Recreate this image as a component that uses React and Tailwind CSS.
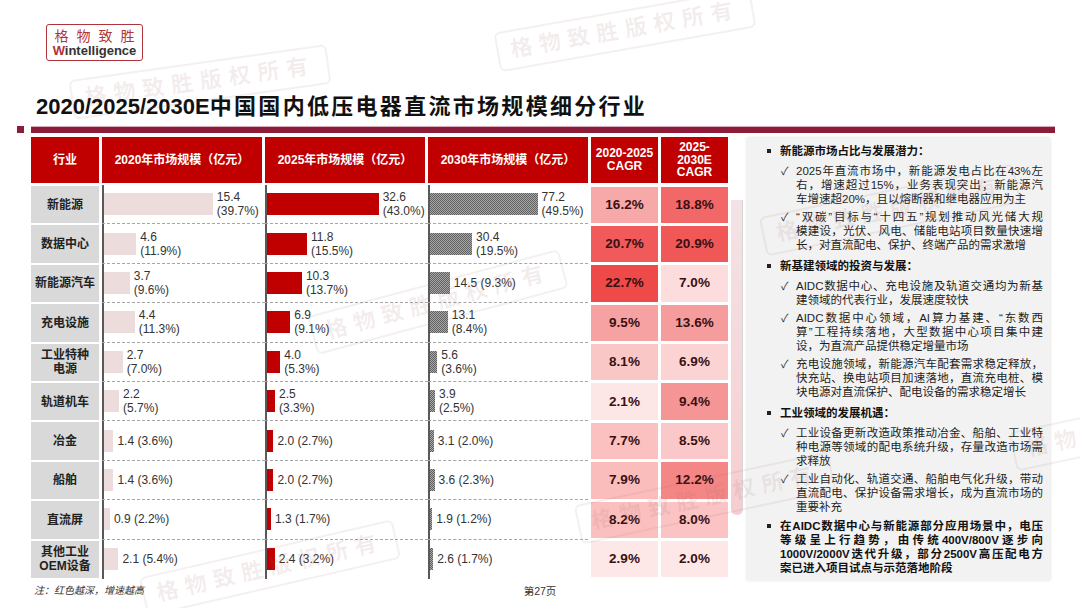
const rows = [
  { name: '新能源', v: [15.4, 32.6, 77.2], t: ['15.4\n(39.7%)', '32.6\n(43.0%)', '77.2\n(49.5%)'], g: ['16.2%', '18.8%'], c: ['bg-[#f7a9a9]', 'bg-[#f26868]'] },
  { name: '数据中心', v: [4.6, 11.8, 30.4], t: ['4.6\n(11.9%)', '11.8\n(15.5%)', '30.4\n(19.5%)'], g: ['20.7%', '20.9%'], c: ['bg-[#f05a5a]', 'bg-[#f05858]'] },
  { name: '新能源汽车', v: [3.7, 10.3, 14.5], t: ['3.7\n(9.6%)', '10.3\n(13.7%)', '14.5 (9.3%)'], g: ['22.7%', '7.0%'], c: ['bg-[#ee4a4a]', 'bg-[#fcdcdc]'] },
  { name: '充电设施', v: [4.4, 6.9, 13.1], t: ['4.4\n(11.3%)', '6.9\n(9.1%)', '13.1\n(8.4%)'], g: ['9.5%', '13.6%'], c: ['bg-[#f6a2a2]', 'bg-[#f59d9d]'] },
  { name: '工业特种\n电源', v: [2.7, 4.0, 5.6], t: ['2.7\n(7.0%)', '4.0\n(5.3%)', '5.6\n(3.6%)'], g: ['8.1%', '6.9%'], c: ['bg-[#fac7c7]', 'bg-[#fcd3d3]'] },
  { name: '轨道机车', v: [2.2, 2.5, 3.9], t: ['2.2\n(5.7%)', '2.5\n(3.3%)', '3.9\n(2.5%)'], g: ['2.1%', '9.4%'], c: ['bg-[#fde6e6]', 'bg-[#f69595]'] },
  { name: '冶金', v: [1.4, 2.0, 3.1], t: ['1.4 (3.6%)', '2.0 (2.7%)', '3.1 (2.0%)'], g: ['7.7%', '8.5%'], c: ['bg-[#fbc0c0]', 'bg-[#fac8c8]'] },
  { name: '船舶', v: [1.4, 2.0, 3.6], t: ['1.4 (3.6%)', '2.0 (2.7%)', '3.6 (2.3%)'], g: ['7.9%', '12.2%'], c: ['bg-[#fbbcbc]', 'bg-[#f48686]'] },
  { name: '直流屏', v: [0.9, 1.3, 1.9], t: ['0.9 (2.2%)', '1.3 (1.7%)', '1.9 (1.2%)'], g: ['8.2%', '8.0%'], c: ['bg-[#fbbfbf]', 'bg-[#fbc3c3]'] },
  { name: '其他工业\nOEM设备', v: [2.1, 2.4, 2.6], t: ['2.1 (5.4%)', '2.4 (3.2%)', '2.6 (1.7%)'], g: ['2.9%', '2.0%'], c: ['bg-[#fde7e7]', 'bg-[#fde7e7]'] },
]

const scale = [7.1, 3.44, 1.4]
const barColor = [
  'bg-[#ecdcdc]',
  'bg-[#c00000]',
  'bg-[conic-gradient(#606060_25%,#a8a8a8_0_50%,#606060_0_75%,#a8a8a8_0)] bg-[length:2px_2px]',
]
const colW = ['w-[163px]', 'w-[163px]', 'w-[160px]']

const notes = [
  {
    head: '新能源市场占比与发展潜力：',
    items: [
      ['2025年直流市场中，新能源发电占比在43%左', '右，增速超过15%，业务表现突出；新能源汽', '车增速超20%，且以熔断器和继电器应用为主'],
      ['“双碳”目标与“十四五”规划推动风光储大规', '模建设，光伏、风电、储能电站项目数量快速增', '长，对直流配电、保护、终端产品的需求激增'],
    ],
  },
  {
    head: '新基建领域的投资与发展：',
    items: [
      ['AIDC数据中心、充电设施及轨道交通均为新基', '建领域的代表行业，发展速度较快'],
      ['AIDC数据中心领域，AI算力基建、“东数西', '算”工程持续落地，大型数据中心项目集中建', '设，为直流产品提供稳定增量市场'],
      ['充电设施领域，新能源汽车配套需求稳定释放，', '快充站、换电站项目加速落地，直流充电桩、模', '块电源对直流保护、配电设备的需求稳定增长'],
    ],
  },
  {
    head: '工业领域的发展机遇：',
    items: [
      ['工业设备更新改造政策推动冶金、船舶、工业特', '种电源等领域的配电系统升级，存量改造市场需', '求释放'],
      ['工业自动化、轨道交通、船舶电气化升级，带动', '直流配电、保护设备需求增长，成为直流市场的', '重要补充'],
    ],
  },
]

const lastPoint = ['在AIDC数据中心与新能源部分应用场景中，电压', '等级呈上行趋势，由传统400V/800V逐步向', '1000V/2000V迭代升级，部分2500V高压配电方', '案已进入项目试点与示范落地阶段']

function Lines({ lines }) {
  return lines.map((l, i) => (
    <div key={i} className={i < lines.length - 1 ? 'whitespace-nowrap text-justify [text-align-last:justify]' : 'whitespace-nowrap'}>
      {l}
    </div>
  ))
}

function Stamp({ className }) {
  return (
    <div className={`pointer-events-none absolute z-10 whitespace-nowrap rounded-[6px] border-2 border-[#a06a6a]/10 px-[12px] py-[3px] text-[22px] font-bold leading-[30px] tracking-[7px] text-[#a06a6a]/12 ${className}`}>
      格物致胜版权所有
    </div>
  )
}

export default function App() {
  return (
    <div lang="zh-CN" className="relative h-[608px] w-[1080px] overflow-hidden bg-white font-['Liberation_Sans','Noto_Sans_CJK_SC',sans-serif] text-[#1a1a1a]">
      {/* logo */}
      <div className="pl-[46px] pt-[24px]">
        <div className="inline-flex h-[37px] w-[97px] flex-col items-center justify-center rounded-[3px] border-[1.5px] border-[#b0343c]">
          <div className="mr-[-8px] text-[14px] leading-[16px] tracking-[8px] text-[#b0343c] font-['Noto_Sans_CJK_SC',sans-serif]">格物致胜</div>
          <div className="text-[13px] font-bold leading-[15px] text-[#333]">
            <span className="text-[#b0343c]">W</span>intelligence
          </div>
        </div>
      </div>

      {/* title */}
      <h1 className="mt-[32px] pl-[36px] text-[22px] font-bold leading-[28px] text-[#111]">
        <span>2020/2025/2030E</span>
        <span className="tracking-[2.3px]">中国国内低压电器直流市场规模细分行业</span>
      </h1>

      <div className="mt-[5px] flex items-center gap-[7px] pl-[17px] pr-[25px]">
        <div className="h-[7px] w-[7px] bg-[#8c1c3a]" />
        <div className="h-[7px] flex-1 border-t-[1.5px] border-[#d9aab8] bg-[#8c1c3a]" />
      </div>

      {/* body */}
      <div className="mt-[4px] flex pl-[31px]">
        {/* table */}
        <div className="w-[697px]">
          <div className="flex h-[46px] gap-[3px] text-[12px] font-bold leading-[13px] text-white">
            <div className="flex w-[68px] items-center justify-center bg-[#c00000]">行业</div>
            <div className="flex w-[160px] items-center justify-center bg-[#c00000]">2020年市场规模（亿元）</div>
            <div className="flex w-[160px] items-center justify-center bg-[#c00000]">2025年市场规模（亿元）</div>
            <div className="flex w-[160px] items-center justify-center bg-[#c00000]">2030年市场规模（亿元）</div>
            <div className="flex w-[67px] flex-col items-center justify-center bg-[#c00000] text-center">
              <span>2020-2025</span>
              <span>CAGR</span>
            </div>
            <div className="flex w-[67px] flex-col items-center justify-center bg-[#c00000] text-center leading-[12.5px]">
              <span>2025-</span>
              <span>2030E</span>
              <span>CAGR</span>
            </div>
          </div>

          <div className="mt-[2px]">
            {rows.map((r, i) => (
              <div key={r.name} className="flex h-[39.4px]">
                <div className="w-[68px] py-[1px]">
                  <div className="flex h-full items-center justify-center whitespace-pre-line bg-[#d9d9d9] text-center text-[12px] font-bold leading-[14px] text-[#222]">
                    {r.name}
                  </div>
                </div>
                <div className="w-[3px]" />
                {r.v.map((v, j) => (
                  <div key={j} className={`flex items-center ${colW[j]} ${i < rows.length - 1 ? 'border-b border-dashed border-[#a6a6a6]' : ''}`}>
                    <div className="w-[1.5px] self-stretch bg-[#595959]" />
                    <div className={`h-[22px] ${barColor[j]}`} style={{ width: v * scale[j] }} />
                    <div className="ml-[4px] whitespace-pre-line text-[12px] leading-[14px] text-[#333]">{r.t[j]}</div>
                  </div>
                ))}
                <div className="w-[3px]" />
                <div className="w-[67px] py-[1.5px]">
                  <div className={`flex h-full items-center justify-center text-[13.5px] font-bold text-[#3a1010] ${r.c[0]}`}>{r.g[0]}</div>
                </div>
                <div className="w-[3px]" />
                <div className="w-[67px] py-[1.5px]">
                  <div className={`flex h-full items-center justify-center text-[13.5px] font-bold text-[#3a1010] ${r.c[1]}`}>{r.g[1]}</div>
                </div>
              </div>
            ))}
          </div>
        </div>

        {/* pink edge strip */}
        <div className="w-[19px]">
          <div className="ml-[3px] mt-[63px] h-[315px] w-[12px] rounded-b-[6px] border-r border-[#d6d6d6] bg-gradient-to-b from-[#f3e3e5] to-[#f6cdd1]" />
        </div>

        {/* notes panel */}
        <div className="mt-[1px] h-[442px] w-[303px] bg-[#f2f2f2] pl-[20px] pr-[5px] pt-[6px] text-[11.5px] leading-[14px] shadow-[0_0_3px_rgba(0,0,0,0.15)]">
          {notes.map((s, i) => (
            <div key={s.head} className={i > 0 ? 'mt-[7px]' : ''}>
              <div className="flex items-center font-bold text-[#111]">
                <span className="w-[13px] shrink-0">
                  <span className="block h-[4px] w-[4px] bg-[#222]" />
                </span>
                <span>{s.head}</span>
              </div>
              {s.items.map((it, k) => (
                <div key={k} className={`ml-[14px] flex ${k === 0 ? 'mt-[6px]' : 'mt-[4px]'}`}>
                  <span className="w-[15px] shrink-0 text-[11px] text-[#333]">✓</span>
                  <div className="w-[247px] text-[#1e1e1e]">
                    <Lines lines={it} />
                  </div>
                </div>
              ))}
            </div>
          ))}
          <div className="mt-[5px] flex font-bold text-[#111]">
            <span className="w-[13px] shrink-0 pt-[5px]">
              <span className="block h-[4px] w-[4px] bg-[#222]" />
            </span>
            <div className="w-[263px]">
              <Lines lines={lastPoint} />
            </div>
          </div>
        </div>
      </div>

      {/* footer */}
      <div className="mt-[4px] grid grid-cols-[1fr_auto_1fr] items-center text-[10px] leading-[14px] text-[#333]">
        <div className="pl-[34px] italic">注：红色越深，增速越高</div>
        <div className="text-[10.5px]">第27页</div>
        <div />
      </div>

      {/* watermarks */}
      <Stamp className="left-[495px] top-[10px] rotate-[-10deg]" />
      <Stamp className="left-[70px] top-[62px] rotate-[-8deg]" />
      <Stamp className="left-[308px] top-[282px] rotate-[-15deg]" />
      <Stamp className="left-[760px] top-[190px] rotate-[-12deg]" />
      <Stamp className="left-[575px] top-[478px] rotate-[-12deg]" />
      <Stamp className="left-[140px] top-[548px] rotate-[-13deg]" />
      <Stamp className="left-[1010px] top-[405px] rotate-[-12deg]" />
    </div>
  )
}
